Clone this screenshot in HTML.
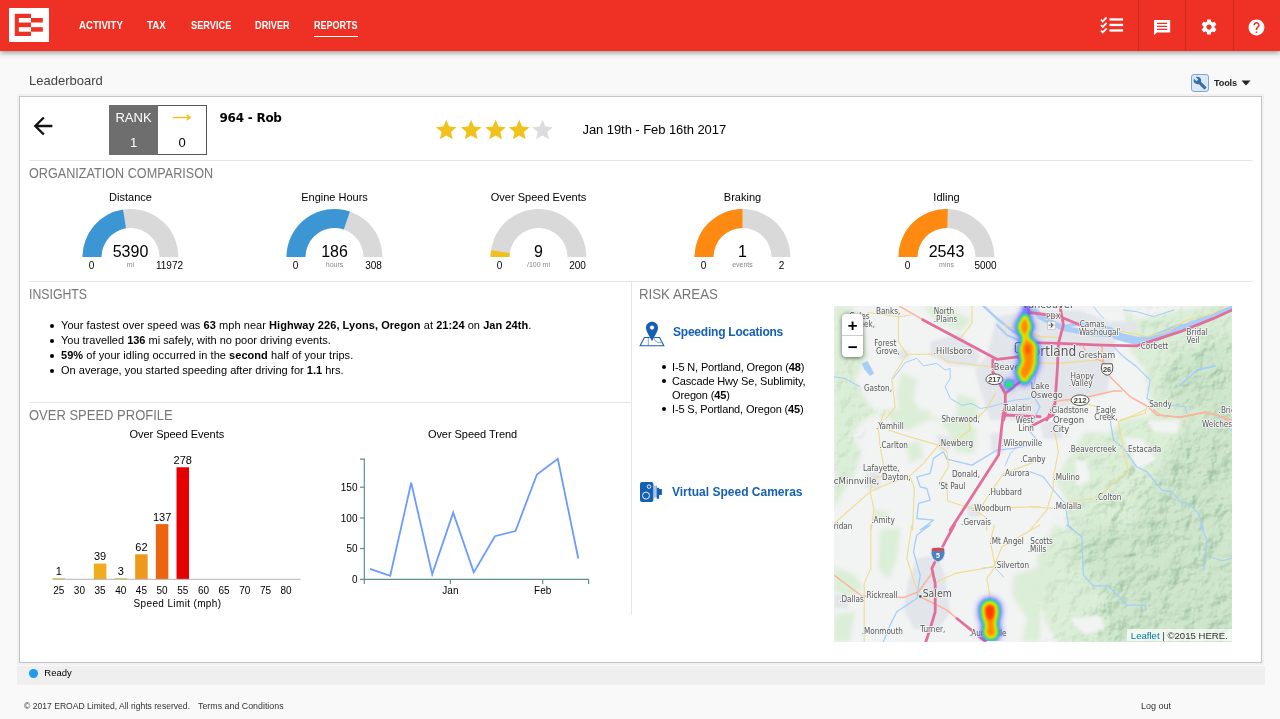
<!DOCTYPE html>
<html lang="en">
<head>
<meta charset="utf-8">
<title>Leaderboard</title>
<style>
*{box-sizing:border-box;margin:0;padding:0}
html,body{width:1280px;height:719px;overflow:hidden}
body{background:#f9f9f9;font-family:"Liberation Sans",Arial,sans-serif;color:#000;position:relative;font-size:11px}
.abs{position:absolute}
#hdr{position:absolute;left:0;top:0;width:1280px;height:51px;background:#ee3124;box-shadow:0 2px 5px rgba(0,0,0,.38)}
#logo{position:absolute;left:9px;top:8px;width:40px;height:34px;background:#fff}
.nav{position:absolute;top:19.200px;color:#fff;font-weight:bold;font-size:10.3px;line-height:13px;letter-spacing:0;transform-origin:0 50%;white-space:nowrap}
.hdiv{position:absolute;top:0;width:1px;height:51px;background:#d4281d}
#crumb{position:absolute;left:29px;top:72.500px;font-size:13px;line-height:16px;color:#444}
#panel{position:absolute;left:19px;top:96px;width:1243px;height:567px;background:#fff;border:1px solid #c4c4c4;box-shadow:0 0 0 2px #f0f0f0}
.hr{position:absolute;height:1px;background:#e6e6e6}
.sec{position:absolute;font-size:14.4px;line-height:16px;color:#777;white-space:nowrap;transform-origin:0 50%}
.t11{position:absolute;font-size:11px;line-height:13px;white-space:nowrap;letter-spacing:.2px}
.ctr{text-align:center}
#status{position:absolute;left:17px;top:665.500px;width:1248px;height:19px;background:#efefef}
.foot{position:absolute;top:700.800px;font-size:9px;line-height:11px;color:#333;white-space:nowrap}
ul.ins{position:absolute;left:61px;top:317.500px;list-style:none;font-size:11px;line-height:15px;letter-spacing:.05px;white-space:nowrap}
ul.ins li{position:relative}
ul.ins li:before{content:"";position:absolute;left:-11px;top:6px;width:4px;height:4px;border-radius:50%;background:#000}
ul.loc{position:absolute;left:672px;top:360px;width:150px;list-style:none;font-size:11px;line-height:14px;letter-spacing:-.15px;white-space:nowrap}
ul.loc li{position:relative}
ul.loc li:before{content:"";position:absolute;left:-9.800px;top:5.200px;width:3.900px;height:3.900px;border-radius:50%;background:#000}
.lnk{position:absolute;color:#1560b3;font-weight:bold;font-size:12px;line-height:14px;white-space:nowrap}
</style>
</head>
<body>

<!-- HEADER -->
<div id="hdr">
  <div id="logo">
    <svg width="40" height="34" viewBox="0 0 40 34">
      <rect x="5.8" y="5.8" width="16.2" height="22.2" fill="#ee3124"/>
      <rect x="9.8" y="10" width="12.2" height="4.5" fill="#fff"/>
      <rect x="9.8" y="19.2" width="12.2" height="4.5" fill="#fff"/>
      <rect x="22" y="10" width="11.8" height="4.5" fill="#ee3124"/>
      <rect x="22" y="19.2" width="11.8" height="4.5" fill="#ee3124"/>
    </svg>
  </div>
  <div class="nav" style="left:79.4px;transform:scaleX(0.934)">ACTIVITY</div>
  <div class="nav" style="left:147.3px;transform:scaleX(0.949)">TAX</div>
  <div class="nav" style="left:190.7px;transform:scaleX(0.896)">SERVICE</div>
  <div class="nav" style="left:255.1px;transform:scaleX(0.892)">DRIVER</div>
  <div class="nav" style="left:314.2px;transform:scaleX(0.876)">REPORTS</div>
  <div class="abs" style="left:314.2px;top:35.700px;width:43.600px;height:1.200px;background:#fff"></div>

  <!-- header icons -->
  <svg class="abs" style="left:1100.3px;top:14.700px" width="25" height="20" viewBox="0 0 25 20">
    <g fill="none" stroke="#fff" stroke-width="1.7"><path d="M1 4.600L2.800 6.400L6.600 2.300"/><path d="M1 10.100L2.800 11.900L6.600 7.800"/><path d="M1 15.600L2.800 17.400L6.600 13.300"/></g>
    <g fill="#fff"><rect x="9.500" y="3.300" width="13.600" height="2.300"/><rect x="9.500" y="8.800" width="13.600" height="2.300"/><rect x="9.500" y="14.300" width="13.600" height="2.300"/></g>
  </svg>
  <svg class="abs" style="left:1154px;top:19.800px" width="17" height="16" viewBox="0 0 17 16"><path d="M0 0h16.200v12.500H2.800L0 15.200z" fill="#fff"/><path d="M3 3.300h10.200M3 6.300h10.200M3 9.300h10.200" stroke="#ee3124" stroke-width="1.200"/></svg>
  <svg class="abs" style="left:1200.300px;top:18.300px" width="18" height="18" viewBox="0 0 24 24"><path d="M19.430 12.980c.040-.320.070-.640.070-.980s-.030-.660-.070-.980l2.110-1.650c.190-.150.240-.420.120-.640l-2-3.460c-.120-.220-.390-.300-.610-.220l-2.490 1c-.520-.400-1.080-.730-1.690-.980l-.380-2.650C14.460 2.180 14.250 2 14 2h-4c-.250 0-.460.180-.490.420l-.380 2.650c-.610.250-1.170.590-1.690.980l-2.490-1c-.230-.090-.490 0-.610.220l-2 3.460c-.130.220-.070.490.12.640l2.110 1.650c-.040.320-.070.650-.070.980s.030.660.070.980l-2.110 1.650c-.190.150-.240.420-.120.640l2 3.460c.120.220.390.300.610.220l2.490-1c.520.400 1.080.730 1.690.980l.380 2.650c.030.240.240.420.490.420h4c.250 0 .460-.180.490-.420l.380-2.650c.610-.250 1.170-.590 1.690-.980l2.490 1c.230.090.490 0 .610-.220l2-3.460c.120-.220.070-.490-.120-.640l-2.110-1.650zM12 15.500c-1.930 0-3.500-1.570-3.500-3.500s1.570-3.500 3.500-3.500 3.500 1.570 3.500 3.500-1.570 3.500-3.500 3.500z" fill="#fff"/></svg>
  <svg class="abs" style="left:1246.900px;top:17.800px" width="19" height="19" viewBox="0 0 24 24"><path d="M12 2C6.480 2 2 6.480 2 12s4.480 10 10 10 10-4.480 10-10S17.520 2 12 2zm1 17h-2v-2h2v2zm2.070-7.750l-.9.920C13.450 12.900 13 13.500 13 15h-2v-.5c0-1.100.450-2.100 1.170-2.830l1.240-1.260c.370-.360.590-.860.590-1.410 0-1.100-.9-2-2-2s-2 .9-2 2H8c0-2.210 1.790-4 4-4s4 1.790 4 4c0 .880-.360 1.680-.930 2.250z" fill="#fff"/></svg>
  <div class="hdiv" style="left:1138px"></div>
  <div class="hdiv" style="left:1185px"></div>
  <div class="hdiv" style="left:1233px"></div>
</div>

<div id="crumb">Leaderboard</div>


<!-- Tools -->
<div class="abs" style="left:1191px;top:74px;width:18px;height:18px;border:1px solid #7fa6cf;border-radius:3px;background:#dce8f5"></div>
<svg class="abs" style="left:1193px;top:76px" width="14" height="14" viewBox="0 0 24 24"><path d="M22.700 19l-9.100-9.100c.9-2.300.4-5-1.500-6.900-2-2-5-2.400-7.400-1.300L9 6 6 9 1.600 4.700C.4 7.100.9 10.100 2.900 12.100c1.900 1.900 4.600 2.400 6.900 1.500l9.100 9.100c.4.400 1 .4 1.400 0l2.300-2.300c.5-.4.500-1.100.1-1.400z" fill="#3a6ea8"/></svg>
<div class="abs" style="left:1214px;top:77px;font-size:9.200px;line-height:12px;font-weight:bold;color:#222;letter-spacing:-.2px">Tools</div>
<svg class="abs" style="left:1241px;top:80px" width="10" height="6" viewBox="0 0 10 6"><path d="M.5 .5h9L5 5.500z" fill="#222"/></svg>
<div id="panel"></div>


<!-- ROW 1 -->
<svg class="abs" style="left:29px;top:112px" width="28" height="28" viewBox="0 0 24 24"><path d="M20 11H7.83l5.59-5.59L12 4l-8 8 8 8 1.41-1.41L7.83 13H20v-2z" fill="#111"/></svg>
<div class="abs" style="left:109px;top:105px;width:98px;height:50px;border:1px solid #555;background:#fff"></div>
<div class="abs" style="left:109px;top:105px;width:49px;height:50px;background:#6e6e6e"></div>
<div class="abs ctr" style="left:109px;top:110px;width:49px;font-size:13px;line-height:15px;color:#fff">RANK</div>
<div class="abs ctr" style="left:109px;top:135px;width:49px;font-size:13px;line-height:15px;color:#fff">1</div>
<svg class="abs" style="left:172px;top:112px" width="20" height="11" viewBox="0 0 20 11"><path d="M1 5.500H17.500M14.800 2.900L18 5.500L14.800 8.100" fill="none" stroke="#f0c11c" stroke-width="1.500"/></svg>
<div class="abs ctr" style="left:158px;top:135px;width:48px;font-size:13px;line-height:15px;color:#000">0</div>
<div class="abs" id="nm" style="left:219.500px;top:109.500px;font-family:'DejaVu Sans','Liberation Sans',sans-serif;font-weight:bold;font-size:12px;line-height:16px;white-space:nowrap;letter-spacing:-.25px">964 - Rob</div>
<svg class="abs" style="left:434px;top:117px" width="122" height="24" viewBox="0 0 122 24">
 <defs><path id="st" d="M0 -10.3L2.9 -3.4L10.3 -2.8L4.7 2.1L6.4 9.3L0 5.5L-6.4 9.3L-4.7 2.1L-10.3 -2.8L-2.9 -3.4Z"/></defs>
 <use href="#st" x="12.3" y="13" fill="#f2c21c"/><use href="#st" x="37.1" y="13" fill="#f2c21c"/><use href="#st" x="61.6" y="13" fill="#f2c21c"/><use href="#st" x="85.2" y="13" fill="#f2c21c"/><use href="#st" x="108.5" y="13" fill="#dcdcdc"/>
</svg>
<div class="abs" id="dt" style="left:582.500px;top:121.800px;letter-spacing:-.07px;font-size:13px;line-height:16px;white-space:nowrap">Jan 19th - Feb 16th 2017</div>
<div class="hr" style="left:29px;top:160px;width:1224px"></div>

<!-- ORG COMPARISON -->
<div class="sec" style="left:29.400px;top:164.800px;transform:scaleX(.878)">ORGANIZATION COMPARISON</div>
<svg class="abs" style="left:0;top:0;font-family:'Liberation Sans',Arial,sans-serif" width="1280" height="290" viewBox="0 0 1280 290"><path d="M82.50 257.00A48 48 0 0 1 178.50 257.00L159.50 257.00A29 29 0 0 0 101.50 257.00Z" fill="#d9d9d9"/><path d="M82.50 257.00A48 48 0 0 1 123.02 209.59L125.98 228.35A29 29 0 0 0 101.50 257.00Z" fill="#3c96d4"/><text x="130.5" y="201" text-anchor="middle" font-size="11">Distance</text><text x="130.5" y="257" text-anchor="middle" font-size="16">5390</text><text x="130.5" y="267" text-anchor="middle" font-size="7" fill="#888">mi</text><text x="91.5" y="269" text-anchor="middle" font-size="10">0</text><text x="169.5" y="269" text-anchor="middle" font-size="10">11972</text><path d="M286.50 257.00A48 48 0 0 1 382.50 257.00L363.50 257.00A29 29 0 0 0 305.50 257.00Z" fill="#d9d9d9"/><path d="M286.50 257.00A48 48 0 0 1 349.89 211.53L343.80 229.53A29 29 0 0 0 305.50 257.00Z" fill="#3c96d4"/><text x="334.5" y="201" text-anchor="middle" font-size="11">Engine Hours</text><text x="334.5" y="257" text-anchor="middle" font-size="16">186</text><text x="334.5" y="267" text-anchor="middle" font-size="7" fill="#888">hours</text><text x="295.5" y="269" text-anchor="middle" font-size="10">0</text><text x="373.5" y="269" text-anchor="middle" font-size="10">308</text><path d="M490.50 257.00A48 48 0 0 1 586.50 257.00L567.50 257.00A29 29 0 0 0 509.50 257.00Z" fill="#d9d9d9"/><path d="M490.50 257.00A48 48 0 0 1 490.98 250.24L509.79 252.91A29 29 0 0 0 509.50 257.00Z" fill="#f2c01d"/><text x="538.5" y="201" text-anchor="middle" font-size="11">Over Speed Events</text><text x="538.5" y="257" text-anchor="middle" font-size="16">9</text><text x="538.5" y="267" text-anchor="middle" font-size="7" fill="#888">/100 mi</text><text x="499.5" y="269" text-anchor="middle" font-size="10">0</text><text x="577.5" y="269" text-anchor="middle" font-size="10">200</text><path d="M694.50 257.00A48 48 0 0 1 790.50 257.00L771.50 257.00A29 29 0 0 0 713.50 257.00Z" fill="#d9d9d9"/><path d="M694.50 257.00A48 48 0 0 1 742.50 209.00L742.50 228.00A29 29 0 0 0 713.50 257.00Z" fill="#ff8a12"/><text x="742.5" y="201" text-anchor="middle" font-size="11">Braking</text><text x="742.5" y="257" text-anchor="middle" font-size="16">1</text><text x="742.5" y="267" text-anchor="middle" font-size="7" fill="#888">events</text><text x="703.5" y="269" text-anchor="middle" font-size="10">0</text><text x="781.5" y="269" text-anchor="middle" font-size="10">2</text><path d="M898.50 257.00A48 48 0 0 1 994.50 257.00L975.50 257.00A29 29 0 0 0 917.50 257.00Z" fill="#d9d9d9"/><path d="M898.50 257.00A48 48 0 0 1 947.80 209.02L947.28 228.01A29 29 0 0 0 917.50 257.00Z" fill="#ff8a12"/><text x="946.5" y="201" text-anchor="middle" font-size="11">Idling</text><text x="946.5" y="257" text-anchor="middle" font-size="16">2543</text><text x="946.5" y="267" text-anchor="middle" font-size="7" fill="#888">mins</text><text x="907.5" y="269" text-anchor="middle" font-size="10">0</text><text x="985.5" y="269" text-anchor="middle" font-size="10">5000</text></svg>
<div class="hr" style="left:29px;top:281px;width:1224px"></div>
<div class="abs" style="left:631px;top:281px;width:1px;height:334px;background:#e6e6e6"></div>

<!-- INSIGHTS -->
<div class="sec" style="left:29.400px;top:286.200px;transform:scaleX(.854)">INSIGHTS</div>
<ul class="ins">
<li style="letter-spacing:.06px">Your fastest over speed was <b>63</b> mph near <b>Highway 226, Lyons, Oregon</b> at <b>21:24</b> on <b>Jan 24th</b>.</li>
<li style="letter-spacing:-.01px">You travelled <b>136</b> mi safely, with no poor driving events.</li>
<li><b>59%</b> of your idling occurred in the <b>second</b> half of your trips.</li>
<li style="letter-spacing:.011px">On average, you started speeding after driving for <b>1.1</b> hrs.</li>
</ul>
<div class="hr" style="left:29px;top:402px;width:602px"></div>

<!-- OVER SPEED PROFILE -->
<div class="sec" style="left:29px;top:407.100px;transform:scaleX(.903)">OVER SPEED PROFILE</div>
<svg class="abs" style="left:0;top:420px;font-family:'Liberation Sans',Arial,sans-serif" width="632" height="200" viewBox="0 420 632 200"><text x="176.800" y="437.5" text-anchor="middle" font-size="11" letter-spacing="-.04">Over Speed Events</text><rect x="52.50" y="578.00" width="12.5" height="1.30" fill="#f2c64a"/><text x="58.75" y="574.70" text-anchor="middle" font-size="11">1</text><rect x="93.84" y="563.58" width="12.5" height="15.72" fill="#f1ab1e"/><text x="100.09" y="560.28" text-anchor="middle" font-size="11">39</text><rect x="114.51" y="578.00" width="12.5" height="1.30" fill="#f2c64a"/><text x="120.76" y="574.70" text-anchor="middle" font-size="11">3</text><rect x="135.18" y="554.31" width="12.5" height="24.99" fill="#ef991b"/><text x="141.43" y="551.01" text-anchor="middle" font-size="11">62</text><rect x="155.85" y="524.09" width="12.5" height="55.21" fill="#eb6411"/><text x="162.10" y="520.79" text-anchor="middle" font-size="11">137</text><rect x="176.52" y="467.27" width="12.5" height="112.03" fill="#e60000"/><text x="182.77" y="463.97" text-anchor="middle" font-size="11">278</text><rect x="52.5" y="578.8" width="248" height="1" fill="#b5b5b5"/><text x="58.75" y="594" text-anchor="middle" font-size="10">25</text><text x="79.42" y="594" text-anchor="middle" font-size="10">30</text><text x="100.09" y="594" text-anchor="middle" font-size="10">35</text><text x="120.76" y="594" text-anchor="middle" font-size="10">40</text><text x="141.43" y="594" text-anchor="middle" font-size="10">45</text><text x="162.10" y="594" text-anchor="middle" font-size="10">50</text><text x="182.77" y="594" text-anchor="middle" font-size="10">55</text><text x="203.44" y="594" text-anchor="middle" font-size="10">60</text><text x="224.11" y="594" text-anchor="middle" font-size="10">65</text><text x="244.78" y="594" text-anchor="middle" font-size="10">70</text><text x="265.45" y="594" text-anchor="middle" font-size="10">75</text><text x="286.12" y="594" text-anchor="middle" font-size="10">80</text><text x="177.5" y="607" text-anchor="middle" font-size="10" letter-spacing=".36">Speed Limit (mph)</text><text x="472.5" y="437.5" text-anchor="middle" font-size="11" letter-spacing="-.04">Over Speed Trend</text><path d="M360 459.200H364.300V579.400M364.300 584V579.400H588.600V584" fill="none" stroke="#5f8f8f" stroke-width="1.2"/><path d="M360 579.4H364.3" stroke="#5f8f8f" stroke-width="1.2"/><text x="357.5" y="583.0" text-anchor="end" font-size="10">0</text><path d="M360 548.5H364.3" stroke="#5f8f8f" stroke-width="1.2"/><text x="357.5" y="552.1" text-anchor="end" font-size="10">50</text><path d="M360 518.0H364.3" stroke="#5f8f8f" stroke-width="1.2"/><text x="357.5" y="521.6" text-anchor="end" font-size="10">100</text><path d="M360 487.2H364.3" stroke="#5f8f8f" stroke-width="1.2"/><text x="357.5" y="490.8" text-anchor="end" font-size="10">150</text><path d="M450.4 579.4V584" stroke="#5f8f8f" stroke-width="1.2"/><text x="450.4" y="594" text-anchor="middle" font-size="10">Jan</text><path d="M542.7 579.4V584" stroke="#5f8f8f" stroke-width="1.2"/><text x="542.7" y="594" text-anchor="middle" font-size="10">Feb</text><polyline fill="none" stroke="#6b9bff" stroke-width="1.800" stroke-linejoin="miter" points="370.0,568.8 390.2,575.8 411.2,482.8 432.2,574.3 453.2,512.6 473.8,572.4 494.9,536.2 515.5,531 536.9,474.5 557.8,458.9 578.3,558.5"/></svg>

<!-- RISK AREAS -->
<div class="sec" style="left:639.200px;top:286.200px;transform:scaleX(.921)">RISK AREAS</div>
<div class="lnk" style="left:673px;top:325px;letter-spacing:-.22px">Speeding Locations</div>
<ul class="loc">
<li>I-5 N, Portland, Oregon (<b>48</b>)</li>
<li>Cascade Hwy Se, Sublimity,<br>Oregon (<b>45</b>)</li>
<li>I-5 S, Portland, Oregon (<b>45</b>)</li>
</ul>
<div class="lnk" style="left:672px;top:485px">Virtual Speed Cameras</div>

<!-- risk icons -->
<svg class="abs" style="left:639px;top:320px" width="26" height="27" viewBox="0 0 26 27">
  <path d="M5.400 17.500h15.200l4.200 8.250H1.100z" fill="#fff" stroke="#1560b3" stroke-width="1.100" stroke-linejoin="miter"/>
  <path d="M9.300 17.300v8M15 17.300q-.5 5 7 5.500" fill="none" stroke="#1560b3" stroke-width=".8" opacity=".7"/>
  <path d="M13 1.800c3.400 0 6 2.600 6 5.900 0 4-4.200 9.200-6 13.600-1.800-4.400-6-9.600-6-13.600 0-3.300 2.600-5.900 6-5.900z" fill="#1560b3" stroke="#fff" stroke-width=".7" paint-order="stroke"/>
  <circle cx="13" cy="7.600" r="2.100" fill="#fff"/>
</svg>
<svg class="abs" style="left:639px;top:480px" width="25" height="24" viewBox="0 0 25 24">
  <rect x="1" y="1.900" width="13.400" height="20" rx="2" fill="#1560b3"/>
  <circle cx="10" cy="6.600" r="1.800" fill="#1560b3" stroke="#fff" stroke-width=".9"/>
  <circle cx="7" cy="15.600" r="3.500" fill="#1560b3" stroke="#fff" stroke-width=".9"/>
  <rect x="14.400" y="5.600" width="3.500" height="12" fill="#7fa3d6"/>
  <path d="M15.300 5.600v12M16.500 5.600v12" stroke="#fff" stroke-width=".4"/>
  <rect x="17.900" y="7.800" width="2.200" height="11" fill="#1560b3"/>
  <rect x="20" y="9" width="2.900" height="6" fill="#1560b3"/>
</svg>
<svg class="abs" style="left:834px;top:306px" width="398" height="335.600" viewBox="834 306 398 335.600">
<defs>
<filter id="gb" x="-5%" y="-5%" width="110%" height="110%"><feGaussianBlur stdDeviation="2.2"/></filter>
<filter id="gb1" x="-5%" y="-5%" width="110%" height="110%"><feGaussianBlur stdDeviation="1.4"/></filter>
<filter id="gb2" x="-5%" y="-5%" width="110%" height="110%"><feGaussianBlur stdDeviation="6"/></filter>
<filter id="hb3" x="834" y="306" width="398" height="335" filterUnits="userSpaceOnUse"><feGaussianBlur stdDeviation="2.4"/></filter>
<filter id="hb2" x="834" y="306" width="398" height="335" filterUnits="userSpaceOnUse"><feGaussianBlur stdDeviation="1.4"/></filter>
<filter id="hb1" x="834" y="306" width="398" height="335" filterUnits="userSpaceOnUse"><feGaussianBlur stdDeviation=".8"/></filter>
<filter id="hill" x="834" y="306" width="398" height="336" filterUnits="userSpaceOnUse" color-interpolation-filters="sRGB">
<feTurbulence type="fractalNoise" baseFrequency=".045" numOctaves="4" seed="11" result="n"/>
<feDiffuseLighting in="n" surfaceScale="3.200" diffuseConstant="1" lighting-color="#fff" result="l"><feDistantLight azimuth="225" elevation="50"/></feDiffuseLighting>
<feComponentTransfer in="l"><feFuncR type="linear" slope=".8" intercept=".39"/><feFuncG type="linear" slope=".55" intercept=".585"/><feFuncB type="linear" slope=".75" intercept=".43"/></feComponentTransfer>
</filter>
<filter id="hill2" x="834" y="306" width="398" height="336" filterUnits="userSpaceOnUse" color-interpolation-filters="sRGB">
<feTurbulence type="fractalNoise" baseFrequency=".08" numOctaves="3" seed="3" result="n"/>
<feDiffuseLighting in="n" surfaceScale="1.500" diffuseConstant="1" lighting-color="#fff" result="l"><feDistantLight azimuth="225" elevation="50"/></feDiffuseLighting>
<feComponentTransfer in="l"><feFuncR type="linear" slope=".7" intercept=".464"/><feFuncG type="linear" slope=".5" intercept=".617"/><feFuncB type="linear" slope=".7" intercept=".464"/></feComponentTransfer>
</filter>
</defs>
<rect x="834" y="306" width="398" height="336" fill="#f2f3f3"/>
<g filter="url(#gb)">
<path d="M1123.5 305.0L1133.5 320.0L1180.3 310.0L1235.3 300.0L1235.3 420.0L1235.3 530.0L1235.3 645.0L1060.1 645.0L1046.7 625.2L1040.0 600.1L1036.7 558.4L1055.0 525.0L1065.9 530.0L1068.4 503.5L1055.0 480.1L1071.7 453.4L1085.1 431.7L1108.5 433.4L1123.5 420.0L1146.9 416.7L1156.9 410.0L1150.2 420.0L1150.2 393.5L1145.2 370.1L1130.2 350.1Z" fill="#dbeed7" />
<path d="M1146.9 345.1L1180.3 333.4L1235.3 311.7L1235.3 420.0L1180.3 420.0L1150.2 393.5L1145.2 370.1Z" fill="#dbeed7" />
<path d="M834.0 306.2L853.4 306.2L850.0 320.0L863.4 333.4L868.4 355.1L855.0 380.1L868.4 403.5L885.1 420.0L883.4 410.0L863.4 420.0L851.7 436.7L861.7 451.7L853.4 476.8L840.0 496.8L834.0 510.2Z" fill="#dbeed7" />
<path d="M885.1 410.0L930.2 410.0L928.5 420.0L908.5 430.0L893.4 425.0Z" fill="#dbeed7" />
<path d="M923.5 306.2L946.9 306.2L971.9 320.0L960.2 331.7L936.8 321.7Z" fill="#dbeed7" />
<path d="M901.8 371.8L916.8 380.1L913.5 400.2L923.5 415.2L946.9 420.0L900.1 420.0L896.8 393.5Z" fill="#dbeed7" />
<path d="M956.9 393.5L976.9 400.2L980.3 420.0L956.9 420.0Z" fill="#dbeed7" />
<path d="M940.2 421.7L963.6 415.0L976.9 430.0L973.6 453.4L956.9 451.7L946.9 430.0Z" fill="#dbeed7" />
<path d="M905.1 443.4L920.2 441.7L923.5 456.7L910.1 463.4Z" fill="#dbeed7" />
<path d="M880.1 530.0L900.1 528.3L896.8 558.4L888.4 580.1L878.4 568.4Z" fill="#dbeed7" />
<path d="M834.0 566.7L855.0 575.1L863.4 588.4L850.0 596.8L834.0 591.8Z" fill="#dbeed7" />
<path d="M834.0 615.2L855.0 611.8L850.0 641.4L834.0 641.4Z" fill="#dbeed7" />
<path d="M1013.6 575.1L1040.0 566.7L1040.0 641.4L1022.0 641.4L1027.0 618.5L1012.0 595.1Z" fill="#dbeed7" />
<path d="M873.4 510.2L890.1 511.8L885.1 520.2L875.1 518.5Z" fill="#dbeed7" />
</g>
<g filter="url(#gb2)" opacity=".75">
<path d="M1185.3 426.7L1235.3 420.0L1235.3 530.0L1130.2 530.0L1146.9 490.1L1166.9 460.1Z" fill="#cbe4ca" />
<path d="M1080.1 525.0L1235.3 525.0L1235.3 645.0L1100.1 645.0L1113.5 595.1L1085.1 580.1Z" fill="#cbe4ca" />
<path d="M1180.3 355.1L1235.3 333.4L1235.3 420.0L1173.6 406.8L1160.2 386.8Z" fill="#cbe4ca" />
</g>
<mask id="hm"><g filter="url(#gb2)">
<path d="M1185.3 426.7L1235.3 420.0L1235.3 530.0L1130.2 530.0L1146.9 490.1L1166.9 460.1Z" fill="#fff"/>
<path d="M1063.4 525.0L1235.3 525.0L1235.3 645.0L1080.1 645.0L1093.4 595.1L1071.7 580.1Z" fill="#fff"/>
<path d="M1173.6 350.1L1235.3 326.7L1235.3 420.0L1173.6 406.8L1160.2 386.8Z" fill="#fff"/>
<path d="M1123.5 465.1L1180.3 451.7L1180.3 530.0L1100.1 530.0L1093.4 503.5Z" fill="#fff"/>
</g></mask>
<mask id="hm2"><g filter="url(#gb2)">
<path d="M1130.2 305.0L1235.3 300.0L1235.3 420.0L1235.3 645.0L1046.7 645.0L1040.0 591.8L1055.0 525.0L1068.4 503.5L1071.7 453.4L1108.5 433.4L1156.9 410.0L1150.2 393.5L1145.2 370.1Z" fill="#fff"/>
<path d="M834.0 306.2L853.4 306.2L863.4 333.4L855.0 380.1L885.1 420.0L863.4 420.0L861.7 451.7L840.0 496.8L834.0 510.2Z" fill="#fff"/>
</g></mask>
<rect x="834" y="306" width="398" height="336" filter="url(#hill)" mask="url(#hm)" style="mix-blend-mode:multiply" opacity=".82"/>
<rect x="834" y="306" width="398" height="336" filter="url(#hill2)" mask="url(#hm2)" style="mix-blend-mode:multiply" opacity=".55"/>
<g filter="url(#gb1)" fill="#f2f3f3">
<path d="M1123.5 436.7L1143.5 440.1L1156.9 460.1L1136.8 470.1L1130.2 453.4Z" fill="#f2f3f3" />
<path d="M1075.1 460.1L1086.8 461.8L1090.1 480.1L1076.7 486.8Z" fill="#f2f3f3" />
<path d="M1146.9 420.0L1180.3 420.0L1176.9 433.4L1153.5 431.7Z" fill="#f2f3f3" />
<path d="M1068.4 618.5L1100.1 615.2L1105.1 628.5L1085.1 635.2Z" fill="#f2f3f3" />
</g>
<g filter="url(#gb1)">
<path d="M996.9 316.7L1040.0 310.0L1080.1 310.0L1116.8 325.0L1113.5 355.1L1106.8 393.5L1063.4 406.8L1040.0 420.0L1023.7 420.0L990.3 420.0L980.3 390.2L975.2 370.1L986.9 355.1Z" fill="#e2e5e9" />
<path d="M930.2 341.7L960.2 333.4L980.3 355.1L976.9 366.8L950.2 365.1L930.2 355.1Z" fill="#e2e5e9" />
<path d="M896.8 350.1L908.5 350.1L910.1 358.4L898.4 358.4Z" fill="#e2e5e9" />
<path d="M916.8 558.4L936.8 555.1L945.2 575.1L950.2 611.8L936.8 631.8L913.5 628.5L903.5 608.5L908.5 580.1Z" fill="#e2e5e9" />
<path d="M834.0 595.1L846.7 593.4L848.4 608.5L834.0 608.5Z" fill="#e2e5e9" />
<path d="M865.1 473.4L880.1 471.8L880.1 488.5L865.1 488.5Z" fill="#e2e5e9" />
<path d="M936.8 435.0L950.2 436.7L950.2 450.1L938.5 450.1Z" fill="#e2e5e9" />
<path d="M990.3 433.4L1003.6 431.7L1003.6 453.4L991.9 451.7Z" fill="#e2e5e9" />
<path d="M1040.0 423.4L1056.7 420.0L1063.4 438.4L1043.4 438.4Z" fill="#e2e5e9" />
<path d="M966.9 503.5L980.3 503.5L980.3 516.8L968.6 516.8Z" fill="#e2e5e9" />
<path d="M1108.5 321.7L1136.8 321.7L1136.8 331.7L1110.1 331.7Z" fill="#e2e5e9" />
</g>
<path d="M1027.0 306.2L1035.3 310.0L1040.0 316.7L1063.4 328.4L1090.1 333.4L1116.8 334.2L1136.8 341.7L1150.2 340.9L1180.3 328.4L1213.6 315.9L1232.0 308.3" fill="none" stroke="#a9cdf6" stroke-width="5.5" stroke-linejoin="round" stroke-linecap="round" />
<path d="M1116.8 335.9L1136.8 340.9L1150.2 339.7L1180.3 327.5" fill="none" stroke="#a9cdf6" stroke-width="8" stroke-linejoin="round" stroke-linecap="round" />
<path d="M1061.7 326.7L1080.1 323.4L1110.1 328.4L1120.2 334.2" fill="none" stroke="#a9cdf6" stroke-width="3" stroke-linejoin="round" stroke-linecap="round" />
<path d="M983.6 306.2L996.9 318.4L1013.6 331.7L1028.7 338.4" fill="none" stroke="#a9cdf6" stroke-width="2.5" stroke-linejoin="round" stroke-linecap="round" />
<path d="M996.9 325.0L1007.0 335.1L1022.0 341.7" fill="none" stroke="#a9cdf6" stroke-width="2" stroke-linejoin="round" stroke-linecap="round" />
<path d="M1033.3 325.0L1030.0 343.4L1035.3 378.5L1032.0 393.5L1040.0 406.8L1036.7 413.3L1030.0 431.7L1040.0 443.4L1013.6 448.4L996.9 450.1L971.9 465.1L946.9 459.2L943.5 451.7L933.5 458.4L930.2 473.4L916.8 476.8L920.2 486.8L926.8 488.5L930.2 500.2L918.5 503.5L916.8 518.5L933.5 520.2L920.2 530.0L930.2 525.0L916.8 535.0L913.5 551.7L920.2 575.1L916.8 598.5L896.8 611.8L890.1 625.2L883.4 641.4" fill="none" stroke="#a2cefa" stroke-width="1.3" stroke-linejoin="round" stroke-linecap="round" />
<path d="M893.4 378.5L905.1 362.6L916.8 358.4L923.5 365.9L936.8 363.4L945.2 370.1L950.2 368.4L950.2 378.5L945.2 386.8L950.2 398.5L961.9 405.2L971.9 403.5L980.3 408.5L990.3 406.8L1013.6 400.2L1030.3 398.5" fill="none" stroke="#a2cefa" stroke-width="1" stroke-linejoin="round" stroke-linecap="round" />
<path d="M861.7 363.4L867.6 360.9L874.2 373.5L870.1 376.0L864.2 369.3Z" fill="#a9cdf6" />
<path d="M834.0 376.8L845.0 378.5L860.1 386.8" fill="none" stroke="#a2cefa" stroke-width="1" stroke-linejoin="round" stroke-linecap="round" />
<path d="M1110.1 420.0L1113.5 440.1L1123.5 448.4L1136.8 466.8L1146.9 471.8L1161.9 490.1L1171.9 491.8L1180.3 501.8L1188.6 503.5L1198.6 513.5L1203.6 530.0" fill="none" stroke="#a2cefa" stroke-width="1.2" stroke-linejoin="round" stroke-linecap="round" />
<path d="M1030.0 471.8L1043.4 476.8L1053.4 490.1L1065.1 503.5L1068.4 525.2L1073.4 530.0" fill="none" stroke="#a2cefa" stroke-width="1.1" stroke-linejoin="round" stroke-linecap="round" />
<path d="M1113.5 346.7L1123.5 356.8L1136.8 366.8L1150.2 380.1L1146.9 398.5L1156.9 403.5L1185.3 406.8L1186.9 413.5" fill="none" stroke="#a2cefa" stroke-width="1.1" stroke-linejoin="round" stroke-linecap="round" />
<path d="M1180.3 385.1L1196.9 370.1L1215.3 365.9" fill="none" stroke="#a2cefa" stroke-width="1.6" stroke-linejoin="round" stroke-linecap="round" />
<path d="M1093.4 306.7L1103.5 318.4" fill="none" stroke="#a2cefa" stroke-width="1" stroke-linejoin="round" stroke-linecap="round" />
<path d="M1123.5 310.0L1136.8 311.7L1153.5 316.7L1173.6 310.0" fill="none" stroke="#a2cefa" stroke-width="1" stroke-linejoin="round" stroke-linecap="round" />
<path d="M1066.7 525.0L1081.8 536.7L1083.4 575.1L1093.4 585.9L1108.5 585.9L1126.8 605.1L1145.2 605.1L1146.0 610.1" fill="none" stroke="#a2cefa" stroke-width="1.2" stroke-linejoin="round" stroke-linecap="round" />
<path d="M1200.3 525.0L1207.0 540.0L1203.6 570.1" fill="none" stroke="#a2cefa" stroke-width="1.2" stroke-linejoin="round" stroke-linecap="round" />
<path d="M1210.3 556.7L1222.0 560.9L1232.0 558.4" fill="none" stroke="#a2cefa" stroke-width="1" stroke-linejoin="round" stroke-linecap="round" />
<path d="M981.9 568.4L993.6 566.7L1003.6 576.8" fill="none" stroke="#a2cefa" stroke-width="1" stroke-linejoin="round" stroke-linecap="round" />
<path d="M1005.3 465.1L1010.3 453.4L1015.3 448.4" fill="none" stroke="#a2cefa" stroke-width="1" stroke-linejoin="round" stroke-linecap="round" />
<path d="M1218.6 416.7L1232.0 431.7" fill="none" stroke="#a2cefa" stroke-width="1" stroke-linejoin="round" stroke-linecap="round" />
<path d="M898.4 310.9L898.4 341.7L906.8 354.3L891.8 378.5L895.1 406.8L885.1 420.0" fill="none" stroke="#efdc8e" stroke-width="1.1" stroke-linejoin="round" stroke-linecap="round" />
<path d="M906.8 354.3L938.5 354.3L946.9 361.8L990.3 366.8" fill="none" stroke="#efdc8e" stroke-width="1.1" stroke-linejoin="round" stroke-linecap="round" />
<path d="M867.6 312.5L898.4 316.7L910.1 315.0" fill="none" stroke="#efdc8e" stroke-width="1.1" stroke-linejoin="round" stroke-linecap="round" />
<path d="M971.9 306.2L971.9 323.4L960.2 338.4" fill="none" stroke="#efdc8e" stroke-width="1.1" stroke-linejoin="round" stroke-linecap="round" />
<path d="M1003.6 325.0L1022.0 330.1L1040.0 335.9" fill="none" stroke="#efdc8e" stroke-width="1.1" stroke-linejoin="round" stroke-linecap="round" />
<path d="M1030.0 335.9L1058.4 337.6" fill="none" stroke="#efdc8e" stroke-width="1.1" stroke-linejoin="round" stroke-linecap="round" />
<path d="M1030.0 362.6L1056.7 363.4L1096.8 360.1" fill="none" stroke="#efdc8e" stroke-width="1.1" stroke-linejoin="round" stroke-linecap="round" />
<path d="M1120.2 330.9L1146.9 336.7L1166.9 331.7L1186.9 320.0L1213.6 313.4L1223.7 306.2" fill="none" stroke="#efdc8e" stroke-width="1.1" stroke-linejoin="round" stroke-linecap="round" />
<path d="M995.3 393.5L986.9 408.5L975.2 420.0" fill="none" stroke="#efdc8e" stroke-width="1.1" stroke-linejoin="round" stroke-linecap="round" />
<path d="M885.1 410.0L878.4 428.4L880.1 446.7L885.1 473.4" fill="none" stroke="#efdc8e" stroke-width="1.1" stroke-linejoin="round" stroke-linecap="round" />
<path d="M888.4 430.0L903.5 435.0L938.5 445.1" fill="none" stroke="#efdc8e" stroke-width="1.1" stroke-linejoin="round" stroke-linecap="round" />
<path d="M938.5 445.1L923.5 463.4L908.5 476.8L885.1 485.1L870.1 491.8L834.0 523.5" fill="none" stroke="#efdc8e" stroke-width="1.1" stroke-linejoin="round" stroke-linecap="round" />
<path d="M938.5 445.1L946.9 451.7L948.5 466.8L938.5 483.5" fill="none" stroke="#efdc8e" stroke-width="1.1" stroke-linejoin="round" stroke-linecap="round" />
<path d="M870.1 491.8L874.2 510.2L870.9 530.0" fill="none" stroke="#efdc8e" stroke-width="1.1" stroke-linejoin="round" stroke-linecap="round" />
<path d="M885.1 473.4L885.1 475.9L873.4 478.4L870.1 491.8" fill="none" stroke="#efdc8e" stroke-width="1.1" stroke-linejoin="round" stroke-linecap="round" />
<path d="M910.1 476.8L914.3 488.5L912.6 530.0" fill="none" stroke="#efdc8e" stroke-width="1.1" stroke-linejoin="round" stroke-linecap="round" />
<path d="M946.9 483.5L947.7 501.0L963.6 506.0L971.9 508.5" fill="none" stroke="#efdc8e" stroke-width="1.1" stroke-linejoin="round" stroke-linecap="round" />
<path d="M968.6 420.0L970.2 430.0L958.5 438.4L938.5 445.1" fill="none" stroke="#efdc8e" stroke-width="1.1" stroke-linejoin="round" stroke-linecap="round" />
<path d="M971.9 508.5L1040.0 506.8" fill="none" stroke="#efdc8e" stroke-width="1.1" stroke-linejoin="round" stroke-linecap="round" />
<path d="M971.9 508.5L985.3 516.8L986.9 530.0" fill="none" stroke="#efdc8e" stroke-width="1.1" stroke-linejoin="round" stroke-linecap="round" />
<path d="M1040.0 460.1L1003.6 473.4L988.6 495.1L980.3 508.5" fill="none" stroke="#efdc8e" stroke-width="1.1" stroke-linejoin="round" stroke-linecap="round" />
<path d="M1118.5 421.7L1123.5 451.7L1128.5 471.8L1116.8 480.1L1096.8 498.5L1071.7 501.0L1068.4 503.5" fill="none" stroke="#efdc8e" stroke-width="1.1" stroke-linejoin="round" stroke-linecap="round" />
<path d="M1145.2 410.0L1130.2 416.7L1118.5 421.7" fill="none" stroke="#efdc8e" stroke-width="1.1" stroke-linejoin="round" stroke-linecap="round" />
<path d="M1055.0 433.4L1058.4 451.7L1053.4 476.8L1053.4 488.5L1046.7 510.2L1030.0 530.0" fill="none" stroke="#efdc8e" stroke-width="1.1" stroke-linejoin="round" stroke-linecap="round" />
<path d="M1030.0 506.8L1055.0 508.5" fill="none" stroke="#efdc8e" stroke-width="1.1" stroke-linejoin="round" stroke-linecap="round" />
<path d="M870.9 525.0L870.9 568.4L864.2 583.4L864.2 641.4" fill="none" stroke="#efdc8e" stroke-width="1.1" stroke-linejoin="round" stroke-linecap="round" />
<path d="M911.8 525.0L906.8 558.4L916.8 590.1" fill="none" stroke="#efdc8e" stroke-width="1.1" stroke-linejoin="round" stroke-linecap="round" />
<path d="M936.8 581.8L955.2 573.4L993.6 566.7L1002.0 546.7L1040.0 525.0" fill="none" stroke="#efdc8e" stroke-width="1.1" stroke-linejoin="round" stroke-linecap="round" />
<path d="M994.4 525.0L990.3 541.7L995.3 566.7L986.9 578.4L990.3 598.5" fill="none" stroke="#efdc8e" stroke-width="1.1" stroke-linejoin="round" stroke-linecap="round" />
<path d="M1096.8 406.8L1080.1 401.8L1058.4 400.2" fill="none" stroke="#efdc8e" stroke-width="1.1" stroke-linejoin="round" stroke-linecap="round" />
<path d="M1146.9 406.8L1145.2 413.5L1120.2 420.0" fill="none" stroke="#efdc8e" stroke-width="1.1" stroke-linejoin="round" stroke-linecap="round" />
<path d="M899.3 306.2L922.7 319.7" fill="none" stroke="#fbb49c" stroke-width="1.5" stroke-linejoin="round" stroke-linecap="round" />
<path d="M1083.4 346.7L1085.1 350.1" fill="none" stroke="#fbb49c" stroke-width="1.5" stroke-linejoin="round" stroke-linecap="round" />
<path d="M1101.8 346.7L1103.5 361.8L1110.1 376.8L1130.2 396.8L1146.9 406.0L1156.9 415.2L1180.3 416.9L1205.3 411.9L1232.0 420.0" fill="none" stroke="#fbb49c" stroke-width="1.5" stroke-linejoin="round" stroke-linecap="round" />
<path d="M1095.1 358.4L1103.5 361.8" fill="none" stroke="#fbb49c" stroke-width="1.5" stroke-linejoin="round" stroke-linecap="round" />
<path d="M1058.4 401.0L1088.4 396.8L1113.5 391.0L1121.8 391.0" fill="none" stroke="#fbb49c" stroke-width="1.5" stroke-linejoin="round" stroke-linecap="round" />
<path d="M1153.5 410.0L1160.2 415.0L1180.3 417.5L1205.3 412.5L1222.0 416.7L1232.0 425.0" fill="none" stroke="#fbb49c" stroke-width="1.5" stroke-linejoin="round" stroke-linecap="round" />
<path d="M834.0 575.1L861.7 596.0L903.5 597.6L918.5 591.8L931.8 573.4" fill="none" stroke="#fbb49c" stroke-width="1.5" stroke-linejoin="round" stroke-linecap="round" />
<path d="M920.2 596.8L946.9 610.1L956.9 618.5" fill="none" stroke="#fbb49c" stroke-width="1.5" stroke-linejoin="round" stroke-linecap="round" />
<path d="M922.7 319.7L996.9 359.3L1018.6 356.8" fill="none" stroke="#e26f9b" stroke-width="2.8" stroke-linejoin="round" stroke-linecap="round" />
<path d="M992.8 360.1L992.8 371.8L1005.3 393.5L1005.3 413.5L1003.6 420.0" fill="none" stroke="#e26f9b" stroke-width="2.8" stroke-linejoin="round" stroke-linecap="round" />
<path d="M1018.6 356.8L1028.7 350.1L1028.7 306.2" fill="none" stroke="#e26f9b" stroke-width="2.8" stroke-linejoin="round" stroke-linecap="round" />
<path d="M1018.6 356.8L1025.3 370.1L1022.0 380.1L1005.3 393.5" fill="none" stroke="#e26f9b" stroke-width="2.8" stroke-linejoin="round" stroke-linecap="round" />
<path d="M1030.0 312.5L1060.1 316.7L1080.1 325.0" fill="none" stroke="#e26f9b" stroke-width="2.8" stroke-linejoin="round" stroke-linecap="round" />
<path d="M1060.1 306.7L1063.4 325.0L1058.4 343.4L1057.5 366.8L1055.0 403.5L1046.7 420.0" fill="none" stroke="#e26f9b" stroke-width="2.8" stroke-linejoin="round" stroke-linecap="round" />
<path d="M1030.0 342.6L1060.1 343.4L1101.8 345.1L1136.8 345.9L1180.3 331.7L1213.6 318.4L1232.0 310.0" fill="none" stroke="#e26f9b" stroke-width="2.8" stroke-linejoin="round" stroke-linecap="round" />
<path d="M1003.6 410.0L998.6 455.1L950.2 530.0" fill="none" stroke="#e26f9b" stroke-width="2.8" stroke-linejoin="round" stroke-linecap="round" />
<path d="M1003.6 415.0L1040.0 416.7" fill="none" stroke="#e26f9b" stroke-width="2.8" stroke-linejoin="round" stroke-linecap="round" />
<path d="M1030.0 426.7L1053.4 415.0" fill="none" stroke="#e26f9b" stroke-width="2.8" stroke-linejoin="round" stroke-linecap="round" />
<path d="M954.4 525.0L945.2 541.7L931.8 568.4L935.2 583.4L935.2 611.8L930.2 628.5L926.0 641.4" fill="none" stroke="#e26f9b" stroke-width="2.8" stroke-linejoin="round" stroke-linecap="round" />
<path d="M956.9 618.5L985.3 641.4" fill="none" stroke="#e26f9b" stroke-width="2.8" stroke-linejoin="round" stroke-linecap="round" />
<g font-family="'DejaVu Sans Condensed','DejaVu Sans',sans-serif" fill="#555" stroke="#f4f5f5" stroke-width="1.6" paint-order="stroke" stroke-linejoin="round" style="font-stretch:condensed">
<text x="875.9" y="313.6" font-size="8.1">Banks,</text>
<text x="933.8" y="314.5" font-size="8.1">North</text>
<text x="933.8" y="322.5" font-size="8.1">.Plains</text>
<text x="874.2" y="346.5" font-size="8.1">Forest</text>
<text x="875.9" y="354.2" font-size="8.1">Grove,</text>
<text x="933.5" y="354.2" font-size="9.2">.Hillsboro</text>
<text x="863.9" y="391.3" font-size="8.1">Gaston,</text>
<text x="991.1" y="370.4" font-size="9.2">.Beaverton</text>
<text x="1001.1" y="411.3" font-size="8.1">.Tualatin</text>
<text x="849.2" y="319.1" font-size="8.1">Gales</text>
<text x="851.7" y="327.0" font-size="8.1">Creek,</text>
<text x="1045.9" y="319.5" font-size="8">PDX</text>
<text x="1079.7" y="327.0" font-size="8.1">Camas,</text>
<text x="1078.9" y="335.3" font-size="8.1">Washougal'</text>
<text x="1186.6" y="335.3" font-size="8.1">Bridal</text>
<text x="1186.6" y="343.3" font-size="8.1">Veil</text>
<text x="1138.5" y="349.5" font-size="8.1">.Corbett</text>
<text x="1026" y="356.4" font-size="13.5">Portland</text>
<text x="1078.4" y="357.9" font-size="9.1">Gresham</text>
<text x="1022" y="308.4" font-size="11">Vancouver</text>
<text x="1070.6" y="378.7" font-size="8.1">Happy</text>
<text x="1068.7" y="386.2" font-size="8.1">.Valley</text>
<text x="1030.8" y="388.7" font-size="8.9">Lake</text>
<text x="1030.8" y="397.6" font-size="8.9">Oswego</text>
<text x="1049.2" y="413.3" font-size="8.1">.Gladstone</text>
<text x="1095.9" y="413.0" font-size="8.1">Eagle</text>
<text x="1094.3" y="420.5" font-size="8.1">Creek,</text>
<text x="1146.9" y="407.1" font-size="8.1">.Sandy</text>
<text x="1218.6" y="413.3" font-size="8.1">.Brightwood</text>
<text x="1052.9" y="423.1" font-size="9.5">Oregon</text>
<text x="1050.0" y="432.0" font-size="9.5">.City</text>
<text x="875.9" y="429.5" font-size="8.1">.Yamhill</text>
<text x="879.2" y="448.2" font-size="8.1">.Carlton</text>
<text x="862.9" y="470.7" font-size="8.1">Lafayette,</text>
<text x="826.5" y="484.1" font-size="9.5">McMinnville,</text>
<text x="882.1" y="480.0" font-size="8.1">Dayton,</text>
<text x="938.5" y="445.8" font-size="8.1">.Newberg</text>
<text x="941.5" y="422.5" font-size="8.1">Sherwood,</text>
<text x="951.9" y="477.5" font-size="8.1">Donald,</text>
<text x="938.5" y="488.7" font-size="8.1">'St Paul</text>
<text x="988.3" y="495.4" font-size="8.1">.Hubbard</text>
<text x="971.9" y="511.3" font-size="8.1">.Woodburn</text>
<text x="961.1" y="525.0" font-size="8.1">.Gervais</text>
<text x="871.2" y="523.0" font-size="8.1">.Amity</text>
<text x="820" y="529.3" font-size="8.1">Sheridan</text>
<text x="1015.8" y="423.1" font-size="8.1">West'</text>
<text x="1018.6" y="430.8" font-size="8.1">Linn</text>
<text x="1001.1" y="445.8" font-size="8.1">.Wilsonville</text>
<text x="1020.3" y="462.0" font-size="8.1">.Canby</text>
<text x="1002.8" y="475.9" font-size="8.1">.Aurora</text>
<text x="1068.4" y="452.0" font-size="8.1">.Beavercreek</text>
<text x="1125.7" y="452.0" font-size="8.1">.Estacada</text>
<text x="1053.4" y="480.0" font-size="8.1">.Mulino</text>
<text x="1095.6" y="499.9" font-size="8.1">.Colton</text>
<text x="1053.4" y="508.8" font-size="8.1">.Molalla</text>
<text x="1202.0" y="427.0" font-size="8.1">Welches</text>
<text x="989.4" y="543.6" font-size="8.1">.Mt Angel</text>
<text x="994.4" y="568.3" font-size="8.1">.Silverton</text>
<text x="922.7" y="597.1" font-size="10.4">Salem</text>
<text x="839.2" y="602.1" font-size="8.1">.Dallas</text>
<text x="866.4" y="597.6" font-size="8.1">Rickreall</text>
<text x="861.7" y="633.8" font-size="8.1">.Monmouth</text>
<text x="920.2" y="631.6" font-size="8.1">Turner,</text>
<text x="968.9" y="636.3" font-size="8.1">.Aumsville</text>
<text x="1030.3" y="544.1" font-size="8.1">Scotts</text>
<text x="1027.8" y="552.0" font-size="8.1">.Mills</text>
</g>
<rect x="919.2" y="595.3" width="2.200" height="2.200" fill="#444"/>
<ellipse cx="994.4" cy="379.3" rx="8.5" ry="5.3" fill="#fafaf5" stroke="#555" stroke-width="1"/><text x="994.4" y="382.1" text-anchor="middle" font-size="7.5" font-weight="bold" fill="#444" font-family="'Liberation Sans',sans-serif">217</text>
<ellipse cx="1080.1" cy="400.2" rx="9.0" ry="5.3" fill="#fafaf5" stroke="#555" stroke-width="1"/><text x="1080.1" y="403.0" text-anchor="middle" font-size="7.5" font-weight="bold" fill="#444" font-family="'Liberation Sans',sans-serif">212</text>
<path d="M1102.1 363.8h10q1.5 4 0 8q-2 3 -5 3.5q-3 -.5 -5 -3.5q-1.5 -4 0 -8z" fill="#fafaf5" stroke="#555" stroke-width="1"/><text x="1107.1" y="371.6" text-anchor="middle" font-size="7.5" font-weight="bold" fill="#444" font-family="'Liberation Sans',sans-serif">26</text>
<path d="M931.5 548.2q6.5 -2 13 0q1.5 6 -1 10q-2.5 3 -5.5 4q-3 -1 -5.5 -4q-2.500 -4 -1 -10z" fill="#4f80c0" stroke="#e8eef8" stroke-width="1"/><path d="M932.0 548.6q6 -1.800 12 0l.3 2.300h-12.600z" fill="#d8474d"/><text x="938.0" y="558.2" text-anchor="middle" font-size="7" font-weight="bold" fill="#fff" font-family="'Liberation Sans',sans-serif">5</text>
<rect x="1015.3" y="342.6" width="12" height="10" rx="2" fill="#eef" stroke="#446" stroke-width="1"/>
<rect x="1047.7" y="321.4" width="8" height="8" fill="#f4f4f4" stroke="#bbb" stroke-width=".6"/><text x="1051.7" y="328.4" text-anchor="middle" font-size="8" fill="#444" font-family="'DejaVu Sans',sans-serif">✈</text>
<g><path filter="url(#hb3)" fill="#4646ff" fill-opacity="0.5" d="M1017.1 317.8L1015.9 319.3L1014.7 321.1L1014.1 323.1L1013.4 324.9L1013.2 327.4L1013.5 329.1L1014.5 332.4L1016.0 334.3L1016.6 335.9L1017.3 337.4L1017.7 339.8L1017.6 341.5L1017.6 343.5L1016.7 346.0L1015.3 347.0L1014.9 347.4L1014.7 349.3L1014.7 350.7L1015.1 352.4L1015.5 354.1L1015.8 356.0L1016.1 357.8L1016.4 359.6L1016.7 361.3L1017.0 360.7L1017.0 359.8L1016.4 361.4L1015.9 362.9L1016.0 362.5L1015.1 363.9L1014.2 365.4L1012.7 371.8L1013.3 374.4L1014.9 377.0L1015.6 380.7L1017.7 383.8L1020.8 385.9L1024.5 386.6L1028.2 385.9L1031.3 383.8L1033.4 380.7L1034.1 377.0L1035.7 375.6L1036.7 374.2L1036.2 377.1L1036.9 375.6L1037.6 374.0L1039.0 370.5L1039.5 368.9L1040.0 367.3L1041.0 363.3L1041.0 359.2L1041.0 357.4L1041.0 355.7L1041.0 354.0L1041.1 352.4L1041.3 350.7L1041.4 349.0L1041.2 346.9L1040.6 345.2L1039.9 342.0L1037.4 339.5L1035.4 338.5L1034.6 337.3L1033.7 335.8L1033.5 335.0L1033.6 333.3L1033.8 331.7L1034.8 329.6L1035.5 329.1L1035.8 327.4L1035.7 326.3L1035.3 324.5L1034.9 322.9L1034.1 321.5L1033.3 319.8L1033.1 316.6L1031.7 313.8L1029.3 311.7L1026.2 310.7L1023.0 310.9L1020.2 312.3L1018.1 314.7ZM976.7 609.2L976.6 611.1L976.8 613.4L977.1 615.4L977.5 617.7L978.1 619.3L978.7 620.7L979.1 622.1L979.6 623.7L980.0 625.5L979.8 627.4L979.6 628.7L979.4 630.0L979.2 631.5L980.3 636.8L982.8 640.5L986.5 643.0L990.9 643.9L995.3 643.0L999.0 640.5L1001.5 636.8L1002.4 632.4L1002.4 630.1L1002.1 628.5L1001.7 626.2L1001.2 624.6L1001.1 623.6L1001.4 621.9L1001.7 620.3L1002.0 618.3L1002.4 616.7L1002.8 615.4L1003.0 613.7L1003.2 611.9L1003.1 610.2L1002.1 604.1L999.2 599.9L995.0 597.0L989.9 596.0L984.8 597.0L980.6 599.9L977.7 604.1ZM1022.9 303.6L1022.4 305.1L1021.8 306.7L1021.3 308.2L1020.7 309.8L1020.1 311.6L1019.3 313.4L1018.6 315.1L1017.8 316.8L1017.0 318.4L1017.5 321.6L1019.2 324.3L1021.7 326.2L1024.8 327.0L1028.0 326.5L1030.7 324.8L1032.6 322.3L1033.4 319.2L1032.8 317.4L1032.1 315.7L1031.5 314.0L1030.9 312.4L1030.7 311.0L1030.5 309.4L1030.4 307.7L1030.2 306.1L1030.1 304.4L1030.0 303.0L1029.3 301.8L1028.3 300.9L1026.9 300.4L1025.5 300.5L1024.3 301.2L1023.4 302.2ZM1023.1 372.8L1021.8 373.7L1020.4 374.6L1019.0 375.5L1017.6 376.4L1016.2 377.3L1014.8 378.2L1013.4 379.1L1012.1 380.0L1010.7 380.9L1009.3 381.8L1007.9 382.7L1007.3 383.3L1007.0 384.0L1006.9 384.8L1007.2 385.6L1007.8 386.2L1008.5 386.5L1009.3 386.6L1010.1 386.3L1011.5 385.5L1013.0 384.6L1014.4 383.8L1015.8 383.0L1017.3 382.2L1018.7 381.3L1020.1 380.5L1021.6 379.7L1023.0 378.9L1024.4 378.0L1025.9 377.2L1026.6 376.5L1027.0 375.6L1027.1 374.6L1026.7 373.6L1026.0 372.9L1025.1 372.5L1024.1 372.4ZM1002.4 384.4a6.5 6.5 0 1 0 13.0 0a6.5 6.5 0 1 0 -13.0 0Z"/>
<path filter="url(#hb2)" fill="#5a5aff" fill-opacity="0.55" d="M1019.2 318.1L1018.1 319.5L1016.9 321.3L1016.3 323.2L1015.6 325.0L1015.4 327.4L1015.7 329.1L1016.6 332.1L1018.2 333.9L1018.8 335.5L1019.4 337.1L1019.8 339.3L1019.8 341.0L1019.8 342.9L1018.8 345.3L1017.5 346.5L1017.1 347.2L1016.9 349.1L1016.9 350.6L1017.3 352.3L1017.7 354.0L1018.0 355.8L1018.3 357.6L1018.6 359.4L1018.9 361.1L1019.2 360.9L1019.0 360.5L1018.5 362.0L1018.0 363.6L1017.9 363.5L1017.0 365.0L1016.2 366.4L1014.9 372.0L1015.5 374.6L1017.1 377.0L1017.7 379.8L1019.3 382.2L1021.7 383.8L1024.5 384.4L1027.3 383.8L1029.7 382.2L1031.3 379.8L1031.9 377.0L1033.5 375.4L1034.5 374.0L1034.2 376.1L1035.0 374.5L1035.7 373.0L1036.9 369.8L1037.4 368.2L1037.9 366.7L1038.8 363.1L1038.8 359.4L1038.8 357.6L1038.8 355.9L1038.8 354.2L1038.9 352.6L1039.1 350.8L1039.2 349.1L1039.0 347.1L1038.4 345.4L1037.7 342.5L1035.3 340.2L1033.2 339.1L1032.4 337.8L1031.6 336.3L1031.3 335.3L1031.5 333.7L1031.6 332.1L1032.6 329.9L1033.3 329.1L1033.6 327.4L1033.5 326.2L1033.1 324.4L1032.7 322.7L1031.9 321.3L1031.2 319.5L1031.0 317.2L1029.9 315.1L1028.2 313.6L1025.9 312.8L1023.6 313.0L1021.5 314.1L1020.0 315.8ZM978.9 609.2L978.8 611.1L979.0 613.4L979.3 615.3L979.7 617.6L980.3 619.1L980.9 620.5L981.3 622.0L981.8 623.6L982.2 625.4L982.0 627.2L981.8 628.6L981.6 629.9L981.4 631.4L982.3 636.0L984.3 639.0L987.3 641.0L990.9 641.7L994.5 641.0L997.5 639.0L999.5 636.0L1000.2 632.4L1000.2 630.2L999.9 628.5L999.5 626.4L999.0 624.8L998.9 623.6L999.2 622.0L999.5 620.4L999.9 618.5L1000.2 616.8L1000.6 615.5L1000.8 613.8L1001.0 612.0L1000.9 610.2L1000.1 605.0L997.7 601.4L994.1 599.0L989.9 598.2L985.7 599.0L982.1 601.4L979.7 605.0ZM1025.1 303.8L1024.6 305.4L1024.0 306.9L1023.4 308.5L1022.9 310.0L1022.3 311.7L1021.5 313.5L1020.8 315.2L1020.0 316.9L1019.2 318.5L1019.6 320.8L1020.8 322.9L1022.7 324.2L1024.9 324.8L1027.2 324.4L1029.3 323.2L1030.6 321.3L1031.2 319.1L1030.6 317.3L1029.9 315.6L1029.3 313.9L1028.7 312.3L1028.5 310.8L1028.4 309.1L1028.2 307.5L1028.0 305.8L1027.9 304.2L1027.8 303.6L1027.6 303.1L1027.2 302.8L1026.7 302.6L1026.1 302.7L1025.6 302.9L1025.3 303.3ZM1024.1 374.3L1022.7 375.2L1021.3 376.1L1019.9 377.0L1018.5 377.9L1017.2 378.8L1015.8 379.7L1014.4 380.6L1013.0 381.5L1011.6 382.4L1010.8 383.0L1010.8 383.1L1010.7 383.3L1010.8 383.4L1010.9 383.5L1011.0 383.6L1011.2 383.6L1011.3 383.5L1012.7 382.7L1014.2 381.9L1015.6 381.0L1017.0 380.2L1018.5 379.4L1019.9 378.6L1021.3 377.7L1022.8 376.9L1024.2 376.1L1025.1 375.5L1025.3 375.2L1025.3 374.9L1025.2 374.6L1025.0 374.4L1024.7 374.2L1024.4 374.2ZM1003.9 384.4a5.0 5.0 0 1 0 10.0 0a5.0 5.0 0 1 0 -10.0 0Z"/>
<path filter="url(#hb1)" fill="#22ccff" fill-opacity="1" d="M1020.1 318.2L1019.0 319.6L1017.8 321.3L1017.2 323.3L1016.5 325.1L1016.3 327.4L1016.6 329.1L1017.5 331.9L1019.1 333.8L1019.7 335.4L1020.3 337.0L1020.7 339.0L1020.6 340.8L1020.6 342.7L1019.7 345.1L1018.4 346.3L1018.0 347.2L1017.8 349.0L1017.8 350.5L1018.2 352.2L1018.6 353.9L1018.9 355.7L1019.2 357.6L1019.5 359.3L1019.8 361.0L1020.1 361.0L1019.9 360.8L1019.4 362.3L1018.8 363.9L1018.7 363.9L1017.8 365.4L1016.9 366.9L1015.8 372.1L1016.4 374.6L1018.0 377.0L1018.5 379.5L1019.9 381.6L1022.0 383.0L1024.5 383.5L1027.0 383.0L1029.1 381.6L1030.5 379.5L1031.0 377.0L1032.6 375.4L1033.6 373.9L1033.5 375.6L1034.2 374.1L1034.9 372.6L1036.1 369.5L1036.6 368.0L1037.1 366.4L1037.9 363.0L1037.9 359.5L1037.9 357.7L1037.9 355.9L1037.9 354.3L1038.0 352.6L1038.2 350.9L1038.3 349.2L1038.1 347.2L1037.5 345.4L1036.8 342.7L1034.4 340.4L1032.4 339.3L1031.6 338.0L1030.7 336.6L1030.4 335.4L1030.6 333.8L1030.7 332.2L1031.7 330.1L1032.4 329.1L1032.7 327.4L1032.6 326.1L1032.2 324.3L1031.8 322.7L1031.0 321.2L1030.3 319.4L1030.1 317.4L1029.2 315.7L1027.7 314.4L1025.8 313.7L1023.8 313.9L1022.1 314.8L1020.8 316.3ZM979.8 609.2L979.7 611.1L979.9 613.3L980.2 615.3L980.6 617.5L981.2 619.1L981.8 620.5L982.2 621.9L982.7 623.5L983.1 625.3L982.9 627.1L982.7 628.5L982.5 629.9L982.3 631.4L983.1 635.6L985.0 638.3L987.7 640.2L990.9 640.8L994.1 640.2L996.8 638.3L998.7 635.6L999.3 632.4L999.3 630.2L999.0 628.6L998.6 626.5L998.1 624.9L998.0 623.7L998.3 622.1L998.6 620.5L999.0 618.5L999.3 616.9L999.7 615.5L999.9 613.8L1000.1 612.0L1000.0 610.2L999.2 605.3L997.0 602.1L993.8 599.9L989.9 599.1L986.0 599.9L982.8 602.1L980.6 605.3ZM1004.7 384.4a4.2 4.2 0 1 0 8.4 0a4.2 4.2 0 1 0 -8.4 0Z"/>
<path filter="url(#hb1)" fill="#35e83a" fill-opacity="1" d="M1021.1 318.3L1020.0 319.8L1018.8 321.4L1018.2 323.4L1017.5 325.1L1017.3 327.4L1017.6 329.1L1018.5 331.8L1020.0 333.7L1020.7 335.3L1021.3 336.8L1021.7 338.8L1021.6 340.5L1021.6 342.4L1020.6 344.8L1019.4 346.1L1019.0 347.1L1018.8 348.9L1018.8 350.5L1019.2 352.2L1019.5 353.9L1019.9 355.6L1020.2 357.5L1020.5 359.2L1020.8 360.9L1021.0 361.1L1020.9 361.1L1020.3 362.6L1019.8 364.2L1019.6 364.4L1018.7 365.9L1017.8 367.3L1016.8 372.2L1017.4 374.6L1019.0 377.0L1019.4 379.1L1020.6 380.9L1022.4 382.1L1024.5 382.5L1026.6 382.1L1028.4 380.9L1029.6 379.1L1030.0 377.0L1031.6 375.4L1032.6 373.8L1032.6 375.2L1033.3 373.6L1034.0 372.1L1035.1 369.2L1035.6 367.6L1036.1 366.1L1037.0 362.9L1036.9 359.6L1036.9 357.8L1036.9 356.0L1036.9 354.4L1037.0 352.7L1037.2 351.0L1037.3 349.2L1037.1 347.3L1036.5 345.5L1035.8 342.9L1033.5 340.7L1031.4 339.6L1030.6 338.3L1029.7 336.8L1029.4 335.6L1029.6 333.9L1029.8 332.3L1030.7 330.2L1031.4 329.1L1031.7 327.4L1031.6 326.1L1031.2 324.2L1030.8 322.6L1030.0 321.0L1029.3 319.3L1029.2 317.7L1028.4 316.3L1027.2 315.2L1025.7 314.7L1024.1 314.8L1022.7 315.6L1021.6 316.8ZM980.8 609.2L980.7 611.1L980.9 613.3L981.2 615.3L981.6 617.4L982.2 619.0L982.8 620.4L983.2 621.9L983.7 623.5L984.1 625.2L983.9 627.0L983.7 628.4L983.5 629.9L983.3 631.4L984.1 635.2L985.7 637.6L988.1 639.2L990.9 639.8L993.7 639.2L996.1 637.6L997.7 635.2L998.3 632.4L998.3 630.2L998.0 628.6L997.6 626.6L997.1 625.0L997.0 623.7L997.3 622.1L997.6 620.5L998.0 618.6L998.3 617.0L998.7 615.6L998.9 613.8L999.1 612.0L999.0 610.2L998.3 605.7L996.3 602.8L993.4 600.8L989.9 600.1L986.4 600.8L983.5 602.8L981.5 605.7ZM1006.0 384.4a2.9 2.9 0 1 0 5.8 0a2.9 2.9 0 1 0 -5.8 0Z"/>
<path filter="url(#hb1)" fill="#f2f000" fill-opacity="1" d="M1022.6 318.5L1021.5 320.0L1020.3 321.6L1019.7 323.5L1019.0 325.2L1018.8 327.4L1019.1 329.1L1020.0 331.6L1021.5 333.5L1022.2 335.0L1022.8 336.6L1023.1 338.4L1023.1 340.2L1023.0 342.0L1022.0 344.3L1020.8 345.9L1020.5 346.9L1020.3 348.8L1020.3 350.4L1020.7 352.1L1021.0 353.8L1021.4 355.5L1021.7 357.3L1022.0 359.1L1022.2 360.8L1022.5 361.3L1022.3 361.5L1021.7 363.1L1021.2 364.7L1020.9 365.1L1020.0 366.6L1019.2 368.0L1018.3 372.4L1018.9 374.7L1020.5 377.0L1020.8 378.5L1021.7 379.8L1023.0 380.7L1024.5 381.0L1026.0 380.7L1027.3 379.8L1028.2 378.5L1028.5 377.0L1030.1 375.3L1031.1 373.6L1031.2 374.5L1032.0 372.9L1032.7 371.4L1033.7 368.8L1034.2 367.2L1034.7 365.6L1035.5 362.7L1035.5 359.7L1035.4 357.9L1035.4 356.2L1035.4 354.5L1035.5 352.8L1035.7 351.1L1035.8 349.3L1035.6 347.4L1035.0 345.7L1034.4 343.1L1032.1 341.2L1030.0 340.0L1029.1 338.6L1028.3 337.2L1028.0 335.8L1028.1 334.2L1028.3 332.5L1029.3 330.4L1029.9 329.1L1030.2 327.4L1030.1 326.0L1029.7 324.1L1029.3 322.4L1028.5 320.8L1027.8 319.1L1027.7 318.1L1027.3 317.2L1026.5 316.5L1025.5 316.2L1024.5 316.3L1023.6 316.7L1022.9 317.5ZM982.3 609.2L982.2 611.1L982.4 613.3L982.7 615.2L983.1 617.3L983.7 618.9L984.3 620.3L984.7 621.8L985.2 623.4L985.6 625.1L985.4 626.9L985.2 628.3L985.0 629.8L984.8 631.4L985.4 634.7L986.7 636.6L988.6 637.9L990.9 638.3L993.2 637.9L995.1 636.6L996.4 634.7L996.8 632.4L996.8 630.3L996.5 628.7L996.1 626.7L995.6 625.1L995.5 623.8L995.8 622.2L996.1 620.6L996.5 618.7L996.8 617.1L997.2 615.7L997.4 613.9L997.6 612.0L997.5 610.2L996.9 606.3L995.3 603.8L992.8 602.2L989.9 601.6L987.0 602.2L984.5 603.8L982.9 606.3Z"/>
<path filter="url(#hb1)" fill="#ffb000" fill-opacity="1" d="M1024.2 318.7L1023.1 320.2L1021.9 321.7L1021.3 323.6L1020.6 325.3L1020.4 327.4L1020.7 329.1L1021.6 331.4L1023.1 333.3L1023.8 334.8L1024.4 336.3L1024.7 338.1L1024.6 339.8L1024.6 341.5L1023.6 343.8L1022.4 345.5L1022.1 346.8L1021.8 348.6L1021.9 350.3L1022.3 352.0L1022.6 353.7L1023.0 355.4L1023.3 357.2L1023.6 358.9L1023.8 360.7L1024.1 361.5L1023.8 362.0L1023.3 363.6L1022.7 365.2L1022.3 365.9L1021.5 367.3L1020.6 368.8L1019.9 372.5L1020.5 374.8L1022.1 377.0L1022.3 377.9L1022.8 378.7L1023.6 379.2L1024.5 379.4L1025.4 379.2L1026.2 378.7L1026.7 377.9L1026.9 377.0L1028.5 375.2L1029.5 373.5L1029.8 373.7L1030.5 372.2L1031.3 370.6L1032.2 368.3L1032.7 366.7L1033.2 365.1L1033.9 362.5L1033.9 359.8L1033.8 358.1L1033.8 356.3L1033.8 354.6L1033.9 352.9L1034.1 351.2L1034.2 349.4L1034.0 347.6L1033.4 345.8L1032.8 343.5L1030.5 341.7L1028.4 340.5L1027.6 339.0L1026.7 337.5L1026.4 336.1L1026.5 334.4L1026.7 332.7L1027.7 330.6L1028.3 329.1L1028.6 327.4L1028.5 325.9L1028.1 324.0L1027.7 322.3L1026.9 320.6L1026.2 318.9L1026.2 318.5L1026.0 318.2L1025.7 317.9L1025.3 317.8L1024.9 317.8L1024.6 318.0L1024.3 318.3ZM983.9 609.2L983.8 611.1L984.0 613.2L984.3 615.2L984.7 617.2L985.3 618.8L985.9 620.3L986.3 621.8L986.8 623.4L987.2 625.0L987.0 626.7L986.8 628.2L986.6 629.8L986.4 631.4L986.9 634.0L987.9 635.4L989.3 636.4L990.9 636.7L992.5 636.4L993.9 635.4L994.9 634.0L995.2 632.4L995.2 630.3L994.9 628.7L994.5 626.8L994.0 625.3L993.9 623.9L994.2 622.2L994.5 620.6L994.9 618.9L995.2 617.2L995.6 615.7L995.8 613.9L996.0 612.0L995.9 610.2L995.4 606.9L994.1 605.0L992.2 603.7L989.9 603.2L987.6 603.7L985.7 605.0L984.4 606.9Z"/>
<path filter="url(#hb1)" fill="#ff8800" fill-opacity="1" d="M1024.6 320.3L1023.4 321.9L1022.8 323.7L1022.1 325.4L1021.9 327.4L1022.2 329.1L1023.1 331.2L1024.0 332.5L1024.2 332.7L1024.5 332.9L1024.9 332.9L1025.2 332.8L1025.5 332.6L1025.7 332.2L1025.7 331.9L1026.7 329.8L1027.0 328.2L1027.2 326.6L1026.8 324.8L1026.4 323.0L1025.8 321.3L1025.4 320.3L1025.4 320.1L1025.2 320.0L1025.1 320.0L1024.9 320.0L1024.7 320.0L1024.6 320.2ZM1026.0 341.1L1025.0 343.4L1023.9 345.2L1023.6 346.7L1023.3 348.5L1023.4 350.2L1023.8 351.9L1024.1 353.6L1024.5 355.3L1024.8 357.1L1025.1 358.8L1025.3 360.6L1025.6 361.6L1025.2 362.5L1024.7 364.1L1024.1 365.6L1023.7 366.6L1022.8 368.0L1021.9 369.5L1021.4 372.7L1022.0 374.9L1023.6 377.0L1023.7 377.3L1023.9 377.6L1024.2 377.8L1024.5 377.9L1024.8 377.8L1025.1 377.6L1025.3 377.3L1025.4 377.0L1027.0 375.1L1028.0 373.3L1028.5 373.0L1029.2 371.5L1029.9 369.9L1030.8 367.8L1031.3 366.2L1031.7 364.6L1032.4 362.4L1032.4 359.9L1032.3 358.2L1032.3 356.4L1032.3 354.7L1032.4 353.0L1032.6 351.3L1032.7 349.5L1032.5 347.7L1031.9 345.9L1031.3 343.8L1029.1 342.1L1027.0 340.9L1026.9 340.7L1026.7 340.6L1026.5 340.5L1026.4 340.5L1026.2 340.6L1026.1 340.8L1026.0 341.0ZM985.4 609.2L985.3 611.1L985.5 613.2L985.8 615.1L986.2 617.1L986.8 618.7L987.4 620.2L987.8 621.7L988.3 623.3L988.7 624.9L988.5 626.6L988.3 628.2L988.1 629.7L987.9 631.3L988.3 633.5L988.9 634.4L989.8 635.0L990.9 635.2L992.0 635.0L992.9 634.4L993.5 633.5L993.7 632.4L993.7 630.4L993.4 628.7L993.0 627.0L992.5 625.4L992.4 623.9L992.7 622.3L993.0 620.7L993.4 619.0L993.7 617.3L994.1 615.8L994.3 613.9L994.5 612.0L994.4 610.2L994.1 607.5L993.1 606.0L991.6 605.0L989.9 604.7L988.2 605.0L986.7 606.0L985.7 607.5Z"/>
<path filter="url(#hb1)" fill="#ff3a00" d="M985.9 609.6L985.8 611.5L986.0 613.5L986.4 615.2L987.5 617.1L987.8 618.1L988.4 618.9L989.2 619.4L990.2 619.6L991.2 619.3L992.0 618.7L992.5 617.9L992.7 616.9L993.6 614.8L993.9 613.2L994.0 611.5L993.9 609.6L993.6 608.1L992.7 606.8L991.4 605.9L989.9 605.6L988.4 605.9L987.1 606.8L986.2 608.1Z"/>
<path filter="url(#hb1)" fill="#ff5a00" d="M1025.8 346.6L1025.4 348.7L1025.5 350.5L1026.1 352.2L1026.6 353.7L1026.9 354.2L1027.5 354.5L1028.1 354.6L1028.7 354.4L1029.2 354.1L1029.5 353.5L1029.6 352.9L1030.0 351.1L1030.4 349.3L1029.7 347.4L1029.2 345.7L1028.8 345.1L1028.2 344.8L1027.5 344.7L1026.8 344.9L1026.2 345.3L1025.9 345.9Z"/></g>
</svg>
<div class="abs" style="left:842px;top:314px;width:21px;height:43px;background:#fff;border-radius:4px;box-shadow:0 1px 4px rgba(0,0,0,.55)"></div>
<div class="abs" style="left:842px;top:335px;width:21px;height:1px;background:#ccc"></div>
<div class="abs ctr" style="left:842px;top:315.500px;width:21px;height:21px;font-family:'Liberation Mono','DejaVu Sans Mono',monospace;font-weight:bold;font-size:17px;line-height:21px;color:#000">+</div>
<div class="abs ctr" style="left:842px;top:339px;width:21px;height:21px;font-family:'Liberation Mono','DejaVu Sans Mono',monospace;font-weight:bold;font-size:17px;line-height:20px;color:#000">−</div>
<div class="abs" style="left:1127px;top:629px;width:105px;height:12.400px;background:rgba(255,255,255,.7)"></div>
<div class="abs" id="attr" style="left:1130.800px;top:629.500px;font-size:9.600px;line-height:12px;color:#333;white-space:nowrap"><span style="color:#0078a8">Leaflet</span> | ©2015 HERE.</div>


<div id="status"></div>
<div class="abs" style="left:29.100px;top:668.900px;width:8.800px;height:8.800px;border-radius:50%;background:#1e9bf0"></div>
<div class="abs" style="left:44.300px;top:667.200px;font-size:9.500px;line-height:12px">Ready</div>

<div class="foot" style="left:24px;transform-origin:0 50%;transform:scaleX(.953)">© 2017 EROAD Limited, All rights reserved.</div>
<div class="foot" style="left:197.500px;transform-origin:0 50%;transform:scaleX(.983)">Terms and Conditions</div>
<div class="foot" style="left:1141px">Log out</div>

</body>
</html>
